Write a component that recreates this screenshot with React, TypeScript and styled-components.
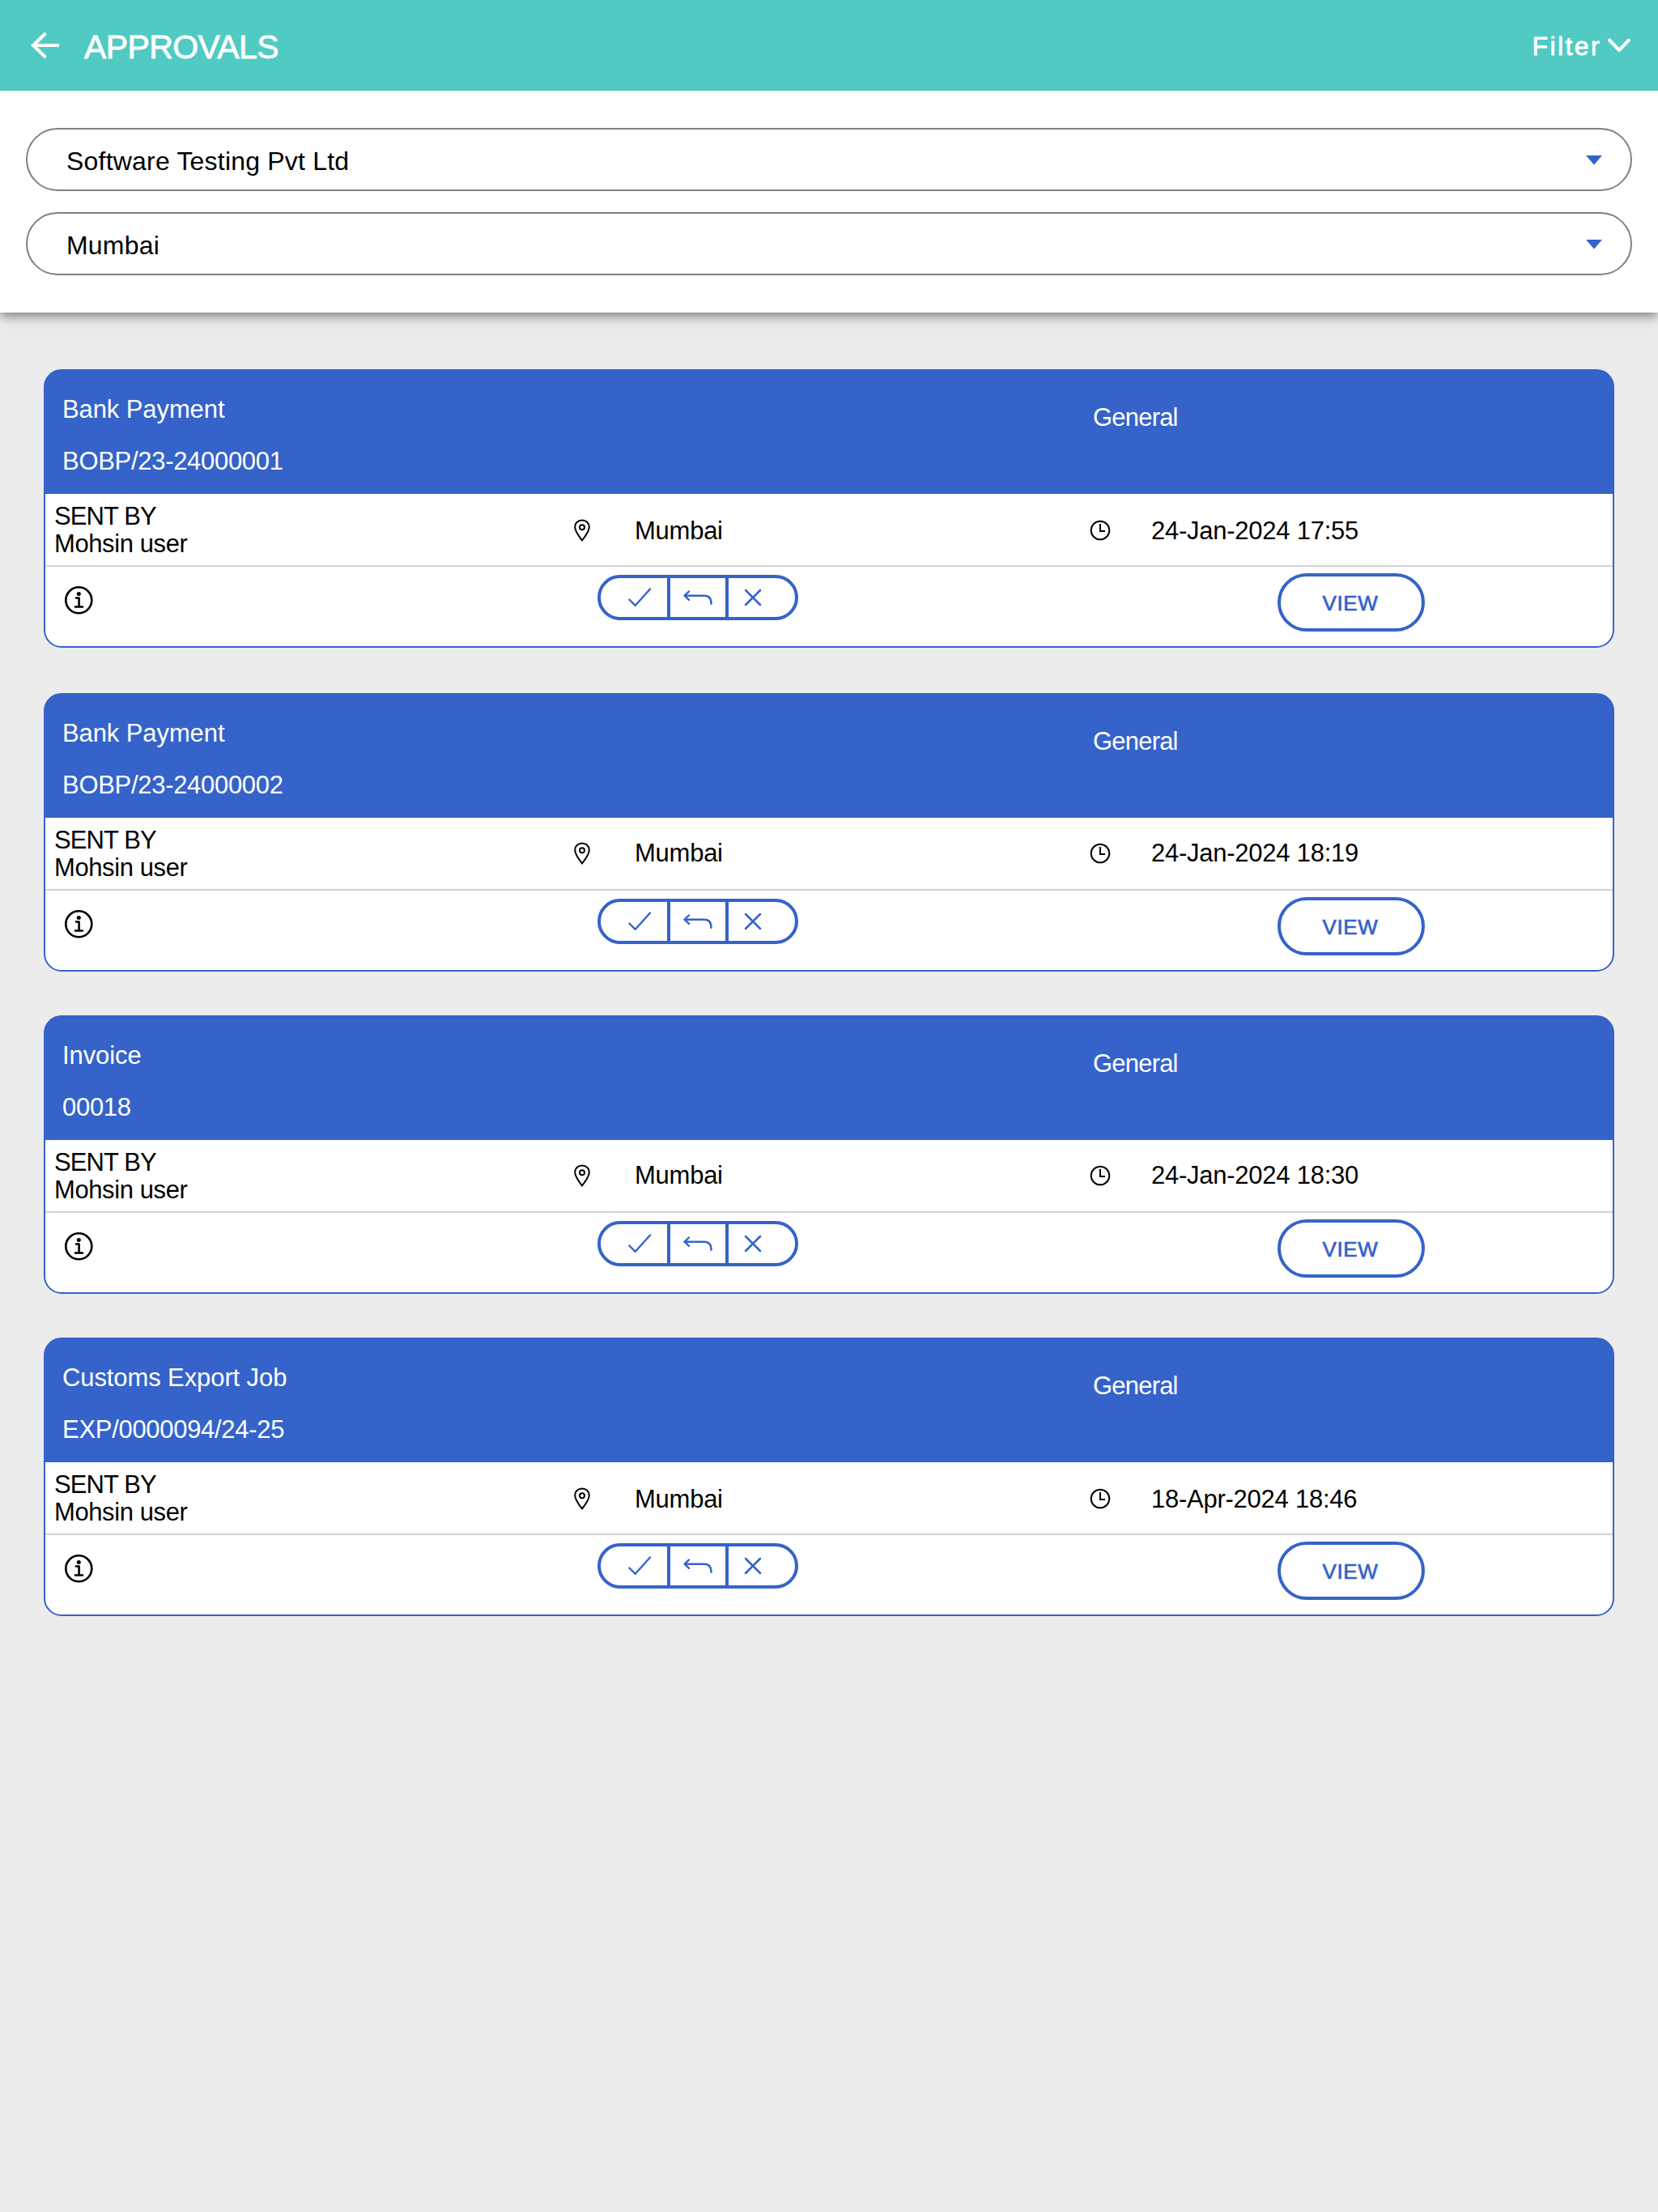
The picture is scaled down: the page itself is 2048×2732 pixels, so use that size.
import React from "react";
import styled, { createGlobalStyle, css } from "styled-components";

const BLUE = "#3563c9";

const GlobalStyle = createGlobalStyle`
  * {
    box-sizing: border-box;
  }

  body {
    margin: 0;
    background-color: #ececec;
    color: #000000;
    font-family: "Liberation Sans", Arial, sans-serif;
  }

  button {
    font-family: inherit;
  }
`;

const Page = styled.div`
  min-height: 2732px;
`;

const Header = styled.header`
  position: relative;
  z-index: 1;
  display: flex;
  align-items: center;
  justify-content: space-between;
  height: 112px;
  padding: 0 33px 0 38px;
  color: #ffffff;
  background-color: #50cac3;
`;

const HeaderLeft = styled.div`
  display: flex;
  align-items: center;
`;

const BackIcon = styled.svg`
  width: 36px;
  height: 34px;
  margin-right: 30px;
`;

const Title = styled.h1`
  margin: 3px 0 0;
  font-size: 41px;
  font-weight: 400;
  line-height: 48px;
  letter-spacing: -0.6px;
  -webkit-text-stroke: 0.8px #ffffff;
`;

const FilterButton = styled.button`
  display: flex;
  align-items: center;
  padding: 2px 0 0;
  border: 0;
  background: none;
  color: inherit;
  cursor: pointer;
  font-size: 32px;
  line-height: 38px;
  letter-spacing: 2.4px;
  -webkit-text-stroke: 0.8px #ffffff;

  svg {
    width: 30px;
    height: 18px;
    margin: 0 0 2px 7px;
  }
`;

const FilterPanel = styled.section`
  display: flex;
  flex-direction: column;
  gap: 26px;
  padding: 46px 32px;
  background-color: #ffffff;
  box-shadow: 0 4px 14px rgba(0, 0, 0, 0.5);
`;

const Select = styled.div`
  display: flex;
  align-items: center;
  justify-content: space-between;
  height: 78px;
  padding: 3px 35px 0 48px;
  border: 2px solid #808080;
  border-radius: 39px;
  font-size: 32px;
  line-height: 38px;
  letter-spacing: 0.2px;
`;

const Caret = styled.svg`
  width: 20px;
  height: 12px;
  margin-top: -1px;
`;

const List = styled.main`
  display: flex;
  flex-direction: column;
  gap: 54px;
  padding: 70px 54px;
`;

const CardHeader = styled.div`
  display: grid;
  grid-template-columns: 1273px 1fr;
  height: 152px;
  padding: 31px 0 0 21px;
  color: #ffffff;
`;

const Document = styled.div`
  display: flex;
  flex-direction: column;
  gap: 30px;
`;

const DocumentType = styled.div`
  letter-spacing: -0.1px;
`;

const DocumentNumber = styled.div`
  letter-spacing: -0.3px;
`;

const Category = styled.div`
  padding-top: 10px;
  letter-spacing: -0.8px;
`;

const CardInfo = styled.div`
  display: grid;
  grid-template-columns: 645px 637px 1fr;
  height: 90px;
  border-bottom: 2px solid #d2d2d2;
`;

const Sender = styled.div`
  padding: 11px 0 0 11px;
  letter-spacing: -0.4px;
`;

const SenderLabel = styled.div`
  letter-spacing: -0.9px;
`;

const InfoItem = styled.div<{ $gap: number }>`
  display: flex;
  align-items: center;
  gap: ${({ $gap }) => $gap}px;
  padding-left: 8px;
  letter-spacing: -0.25px;

  svg {
    flex: none;
    margin-bottom: 1px;
  }
`;

const Card = styled.article`
  height: 344px;
  border: 2px solid ${BLUE};
  border-radius: 22px;
  background: linear-gradient(${BLUE} 152px, #ffffff 152px);
  font-size: 31px;
  line-height: 34px;

  &:first-child {
    margin-bottom: 2px;
  }

  &:first-child ${InfoItem}, &:last-child ${InfoItem} {
    padding-top: 3px;
  }
`;

const CardActions = styled.div`
  display: grid;
  grid-template-columns: 682px 840px 1fr;
  align-items: start;
`;

const InfoIcon = styled.svg`
  width: 36px;
  height: 36px;
  margin: 23px 0 0 23px;
`;

const ActionGroup = styled.div`
  display: flex;
  width: 248px;
  height: 56px;
  margin-top: 10px;
  border: 4px solid ${BLUE};
  border-radius: 28px;
  overflow: hidden;
`;

const ActionButton = styled.button<{ $side?: "left" | "right" }>`
  flex: 0 0 68px;
  padding: 0;
  border: 0;
  background: none;
  color: ${BLUE};
  cursor: pointer;

  svg {
    display: block;
    width: 100%;
    height: 48px;
  }

  ${({ $side }) =>
    $side &&
    css`
      flex-basis: 86px;
      border-${$side === "left" ? "right" : "left"}: 4px solid ${BLUE};
    `};
`;

const ViewButton = styled.button`
  width: 182px;
  height: 72px;
  margin-top: 8px;
  padding: 2px 2px 0 0;
  border: 4px solid ${BLUE};
  border-radius: 36px;
  background: none;
  color: ${BLUE};
  cursor: pointer;
  font-size: 26px;
  letter-spacing: 0.6px;
  -webkit-text-stroke: 0.7px ${BLUE};
`;

interface Approval {
  type: string;
  number: string;
  category: string;
  sender: string;
  location: string;
  date: string;
}

const approvals: Approval[] = [
  {
    type: "Bank Payment",
    number: "BOBP/23-24000001",
    category: "General",
    sender: "Mohsin user",
    location: "Mumbai",
    date: "24-Jan-2024 17:55",
  },
  {
    type: "Bank Payment",
    number: "BOBP/23-24000002",
    category: "General",
    sender: "Mohsin user",
    location: "Mumbai",
    date: "24-Jan-2024 18:19",
  },
  {
    type: "Invoice",
    number: "00018",
    category: "General",
    sender: "Mohsin user",
    location: "Mumbai",
    date: "24-Jan-2024 18:30",
  },
  {
    type: "Customs Export Job",
    number: "EXP/0000094/24-25",
    category: "General",
    sender: "Mohsin user",
    location: "Mumbai",
    date: "18-Apr-2024 18:46",
  },
];

const SelectField = ({ value }: { value: string }) => (
  <Select role="combobox">
    <span>{value}</span>
    <Caret viewBox="0 0 20 12">
      <path d="M0 0h20L10 11.5z" fill={BLUE} />
    </Caret>
  </Select>
);

const PinIcon = () => (
  <svg width="20" height="28" viewBox="0 0 20 28" fill="none" stroke="#000000" strokeWidth="2">
    <path d="M10 26.3C7.5 23.2 1.2 15.2 1.2 9.7A8.8 8.3 0 0 1 18.8 9.7C18.8 15.2 12.5 23.2 10 26.3z" />
    <circle cx="10" cy="10.2" r="3" />
  </svg>
);

const ClockIcon = () => (
  <svg width="26" height="26" viewBox="0 0 26 26" fill="none" stroke="#000000" strokeWidth="2">
    <circle cx="13" cy="13" r="11.3" />
    <path d="M13 5v9h6" />
  </svg>
);

const ApprovalCard = ({ approval }: { approval: Approval }) => (
  <Card>
    <CardHeader>
      <Document>
        <DocumentType>{approval.type}</DocumentType>
        <DocumentNumber>{approval.number}</DocumentNumber>
      </Document>
      <Category>{approval.category}</Category>
    </CardHeader>
    <CardInfo>
      <Sender>
        <SenderLabel>SENT BY</SenderLabel>
        <div>{approval.sender}</div>
      </Sender>
      <InfoItem $gap={55}>
        <PinIcon />
        <span>{approval.location}</span>
      </InfoItem>
      <InfoItem $gap={50}>
        <ClockIcon />
        <span>{approval.date}</span>
      </InfoItem>
    </CardInfo>
    <CardActions>
      <InfoIcon viewBox="0 0 36 36" fill="none" stroke="#000000">
        <circle cx="18.3" cy="18.3" r="16" strokeWidth="2.6" />
        <circle cx="18.3" cy="10.5" r="2.5" fill="#000000" stroke="none" />
        <path d="M15 15.5h3.6v11M14 26.5h9" strokeWidth="2.6" strokeLinecap="round" strokeLinejoin="round" />
      </InfoIcon>
      <ActionGroup>
        <ActionButton $side="left" aria-label="Approve">
          <svg viewBox="0 0 82 48" fill="none" stroke="currentColor" strokeWidth="2.4" strokeLinecap="round" strokeLinejoin="round">
            <path d="M35.3 26.5l7.5 7.3L61 13.5" />
          </svg>
        </ActionButton>
        <ActionButton aria-label="Send back">
          <svg viewBox="0 0 68 48" fill="none" stroke="currentColor" strokeWidth="2.4" strokeLinecap="round" strokeLinejoin="round">
            <path d="M23 16.5l-5.5 5.2 5.5 5.2M17.5 21.7H42c6 0 8.5 4 8.5 10" />
          </svg>
        </ActionButton>
        <ActionButton $side="right" aria-label="Reject">
          <svg viewBox="0 0 82 48" fill="none" stroke="currentColor" strokeWidth="2.5" strokeLinecap="round">
            <path d="M21 15l18 18M39 15L21 33" />
          </svg>
        </ActionButton>
      </ActionGroup>
      <ViewButton>VIEW</ViewButton>
    </CardActions>
  </Card>
);

const App = () => (
  <Page>
    <GlobalStyle />
    <Header>
      <HeaderLeft>
        <BackIcon viewBox="0 0 36 34" fill="none" stroke="#ffffff" strokeWidth="4">
          <path d="M18.5 2L3 17l15.5 15M3 17h32" />
        </BackIcon>
        <Title>APPROVALS</Title>
      </HeaderLeft>
      <FilterButton>
        Filter
        <svg viewBox="0 0 30 18" fill="none" stroke="#ffffff" strokeWidth="4" strokeLinecap="round" strokeLinejoin="round">
          <path d="M3 2.5l12 12.5 12-12.5" />
        </svg>
      </FilterButton>
    </Header>
    <FilterPanel>
      <SelectField value="Software Testing Pvt Ltd" />
      <SelectField value="Mumbai" />
    </FilterPanel>
    <List>
      {approvals.map((approval) => (
        <ApprovalCard key={approval.number} approval={approval} />
      ))}
    </List>
  </Page>
);

export default App;
